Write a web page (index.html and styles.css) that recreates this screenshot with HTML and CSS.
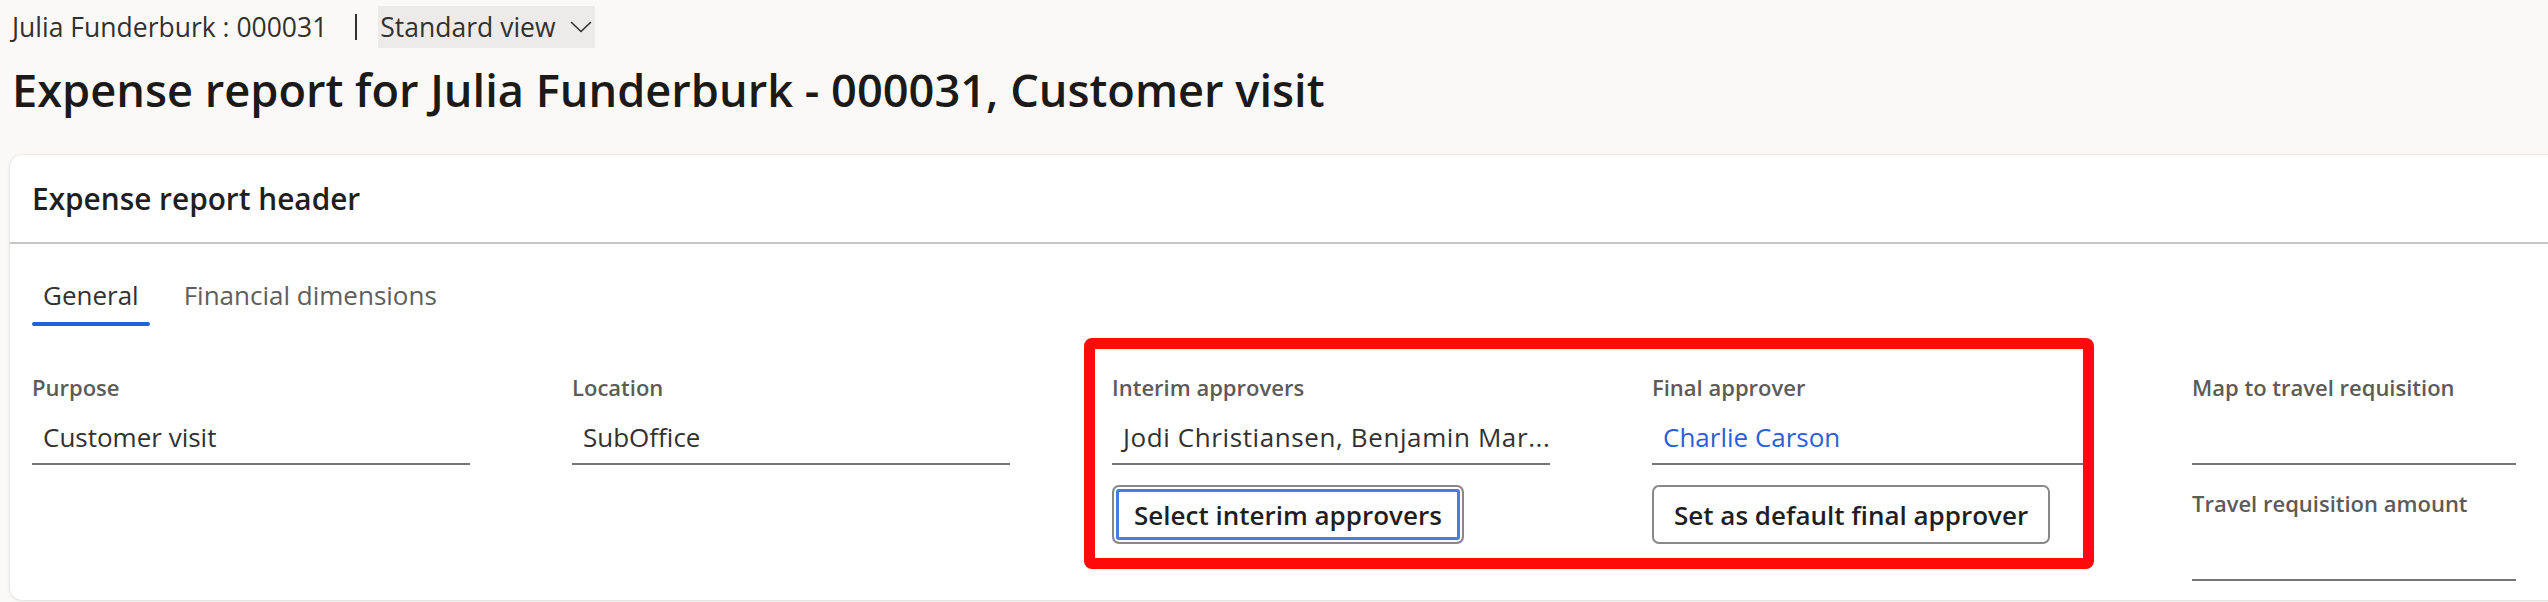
FILE: index.html
```html
<!DOCTYPE html>
<html lang="en">
<head>
<meta charset="utf-8">
<title>Expense report</title>
<link rel="stylesheet" href="styles.css">
</head>
<body>
<div class="page">
  <div class="crumbs">
    <span class="crumb">Julia Funderburk : 000031</span>
    <span class="crumb-sep"></span>
    <button class="view-btn">Standard view
      <svg class="chev" width="22" height="12" viewBox="0 0 22 12"><polyline points="1.5,1.5 11,10.5 20.5,1.5" fill="none" stroke="#323130" stroke-width="1.6" stroke-linejoin="round" stroke-linecap="round"/></svg>
    </button>
  </div>
  <h1 class="title">Expense report for Julia Funderburk - 000031, Customer visit</h1>

  <section class="card">
    <div class="card-head">Expense report header</div>
    <div class="card-body">
      <div class="tabs">
        <div class="tab active">General</div>
        <div class="tab">Financial dimensions</div>
      </div>
      <div class="fields">
        <div class="col">
          <div class="field">
            <div class="label">Purpose</div>
            <div class="value">Customer visit</div>
          </div>
        </div>
        <div class="col">
          <div class="field">
            <div class="label">Location</div>
            <div class="value">SubOffice</div>
          </div>
        </div>
        <div class="col">
          <div class="field">
            <div class="label">Interim approvers</div>
            <div class="value value-spaced">Jodi Christiansen, Benjamin Mar...</div>
          </div>
          <button class="btn focused">Select interim approvers</button>
        </div>
        <div class="col">
          <div class="field">
            <div class="label">Final approver</div>
            <div class="value link">Charlie Carson</div>
          </div>
          <button class="btn">Set as default final approver</button>
        </div>
        <div class="col">
          <div class="field">
            <div class="label">Map to travel requisition</div>
            <div class="value"></div>
          </div>
          <div class="field second">
            <div class="label">Travel requisition amount</div>
            <div class="value"></div>
          </div>
        </div>
      </div>
    </div>
    <div class="highlight"></div>
  </section>
</div>
</body>
</html>
```

FILE: styles.css
```css
* { box-sizing: border-box; }

html, body {
  margin: 0;
  padding: 0;
}

body {
  background: #faf9f8;
  font-family: "Open Sans", "Noto Sans", sans-serif;
  color: #323130;
  width: 2548px;
  height: 602px;
  overflow: hidden;
}

.page {
  padding-top: 6px;
}

.crumbs {
  display: flex;
  align-items: center;
  height: 42px;
  padding-left: 12px;
}

.crumb {
  font-size: 26.5px;
  line-height: 42px;
  color: #323130;
}

.crumb-sep {
  width: 2px;
  height: 26px;
  background: #323130;
  margin: 0 21px 0 28px;
}

.view-btn {
  display: flex;
  align-items: center;
  gap: 14px;
  height: 42px;
  padding: 0 3px 0 2px;
  border: none;
  background: #edebe9;
  font-family: inherit;
  font-size: 26.5px;
  color: #323130;
}

.chev { display: block; }

.title {
  margin: 14px 0 0;
  padding-left: 12px;
  font-size: 45.2px;
  line-height: 56px;
  font-weight: 600;
  color: #1b1a19;
  white-space: nowrap;
}

.card {
  position: relative;
  margin: 37px 0 0 10px;
  width: 2570px;
  height: 445px;
  background: #fff;
  border-radius: 12px;
  box-shadow: 0 0 2px rgba(0, 0, 0, 0.14), 0 1px 4px rgba(0, 0, 0, 0.08);
}

.card-head {
  height: 89px;
  line-height: 87px;
  padding: 0 22px;
  font-size: 29.8px;
  font-weight: 600;
  color: #201f1e;
  border-bottom: 2px solid #c8c6c4;
}

.card-body {
  padding: 33px 22px 0;
}

.tabs {
  display: flex;
  gap: 23px;
}

.tab {
  position: relative;
  padding: 0 11px 13px;
  font-size: 26px;
  line-height: 36px;
  color: #605e5c;
}

.tab.active {
  color: #323130;
}

.tab.active::after {
  content: "";
  position: absolute;
  left: 0;
  right: 0;
  bottom: 0;
  height: 4px;
  border-radius: 2px;
  background: #1f63d8;
}

.fields {
  display: grid;
  grid-template-columns: repeat(4, 438px) 324px;
  column-gap: 102px;
  margin-top: 46px;
  align-items: start;
}

.col {
  display: flex;
  flex-direction: column;
  align-items: flex-start;
}

.field {
  align-self: stretch;
}

.field.second {
  margin-top: 23px;
}

.label {
  font-size: 22px;
  line-height: 30px;
  font-weight: 600;
  color: #5c5b59;
  white-space: nowrap;
}

.value {
  margin-top: 17px;
  height: 46px;
  padding: 0 11px 8px;
  font-size: 26px;
  line-height: 36px;
  color: #323130;
  white-space: nowrap;
  overflow: hidden;
  border-bottom: 2px solid #767574;
}

.value-spaced {
  letter-spacing: 0.6px;
}

.value.link {
  color: #2b5fd9;
}

.btn {
  margin-top: 20px;
  height: 59px;
  padding: 0 20px;
  border: 2px solid #8a8886;
  border-radius: 7px;
  background: #fff;
  font-family: inherit;
  font-size: 26px;
  font-weight: 600;
  color: #1f1f1f;
}

.btn.focused {
  box-shadow: inset 0 0 0 2px #fff, inset 0 0 0 5px #4a7be0;
}

.highlight {
  position: absolute;
  left: 1074px;
  top: 183px;
  width: 1010px;
  height: 231px;
  border: 11px solid #ff0b0b;
  border-radius: 8px;
  pointer-events: none;
}
```
